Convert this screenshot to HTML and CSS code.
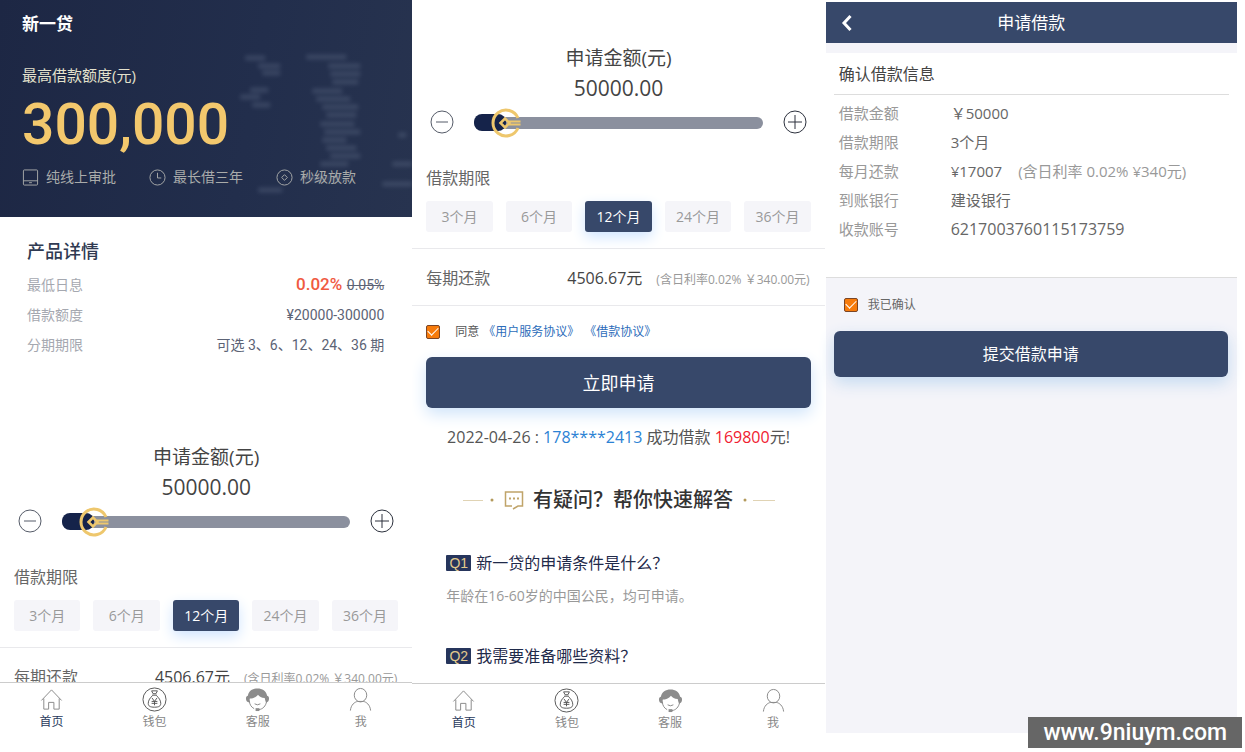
FILE: index.html
```html
<!DOCTYPE html>
<html lang="zh-CN">
<head>
<meta charset="utf-8">
<meta name="viewport" content="width=device-width, initial-scale=1">
<title>新一贷</title>
<link rel="stylesheet" href="styles.css">
</head>
<body>
<svg class="defs" aria-hidden="true">
  <symbol id="i-minus" viewBox="0 0 24 24"><circle cx="12" cy="12" r="11"/><path d="M6 12h12"/></symbol>
  <symbol id="i-plus" viewBox="0 0 24 24"><circle cx="12" cy="12" r="11"/><path d="M5 12h14M12 5v14"/></symbol>
  <symbol id="i-knob" viewBox="0 0 30 30"><path d="M27 10A13 13 0 1 0 27 20" stroke-width="3"/><path d="M9.500 15l4.500-4.500 4.500 4.500-4.500 4.500z" stroke-width="2.500"/><path d="M18 13.500h11.500M18 16.500h11.500" stroke-width="1.800"/></symbol>
  <symbol id="i-home" viewBox="0 0 26 26"><path d="M2.500 14L13 3l10.500 11M5 12v11h5v-7h5.500v7H21V12"/></symbol>
  <symbol id="i-purse" viewBox="0 0 26 26"><circle cx="13" cy="13" r="12"/><path d="M10 4h6l-1.500 3h-3zM10.500 8.500h5M11 9c-2.500 2-4.500 5-4.500 8 0 3 2 4 6.500 4s6.500-1 6.500-4c0-3-2-6-4.500-8"/><path d="M10.500 11.500l2.500 3.500 2.500-3.500M13 15v4M10 15h6M10 17h6"/></symbol>
  <symbol id="i-service" viewBox="0 0 26 26"><path class="solid" d="M1 12c0-2 1-3 2-3C4 4 8 1.500 13 1.500S22 4 23 9c1 0 2 1 2 3s-1 4-3 4c-1-1-1-3-1.500-4.500C17 11 15 10 13.500 8c-2 3-6 4-8.500 4L4.500 16C2 16 1 14 1 12z"/><path d="M4.500 14c0 4 2 7 5 8.500M22.500 15c-1 5-4 8-8 8.500M10 17.500q3 2 6 0"/><path class="solid" d="M11 22h4v3h-4z"/></symbol>
  <symbol id="i-me" viewBox="0 0 26 26"><ellipse cx="13" cy="8.500" rx="6.500" ry="7"/><path d="M2.500 24.500C3 18.500 7 15.500 10 15h6c3 .5 7 3.500 7.500 9.500"/></symbol>
</svg>

<div class="screens">
  <div class="screen">
    <main class="view">
      <header class="hero">
        <svg class="coins" viewBox="0 0 412 217" preserveAspectRatio="xMaxYMid slice" aria-hidden="true">
          <g class="coin-blur">
            <path d="M245 58h20M258 66h22M262 73h18M250 90h18M240 97h20M252 105h18M258 190h24"/>
            <path d="M306 57h40M328 66h32M330 74h30M332 82h26M312 91h30M316 99h34M322 107h36M326 115h30M320 124h34M324 132h36M322 140h24M326 148h30M330 156h30M320 164h28"/>
            <path d="M392 164h20M382 184h30M398 135h8M302 178h40"/>
          </g>
        </svg>
        <h1 class="brand">新一贷</h1>
        <p class="limit-label">最高借款额度(元)</p>
        <p class="limit">300,000</p>
        <ul class="perks">
          <li><svg class="perk-icon" viewBox="0 0 18 18" aria-hidden="true"><rect x="1.500" y="1" width="15" height="16" rx="1"/><path d="M1.500 12.500h15M7.500 14.500h3"/></svg>纯线上审批</li>
          <li><svg class="perk-icon" viewBox="0 0 18 18" aria-hidden="true"><circle cx="9" cy="9" r="8"/><path d="M9 4v5.500h4"/></svg>最长借三年</li>
          <li><svg class="perk-icon" viewBox="0 0 18 18" aria-hidden="true"><circle cx="9" cy="9" r="8"/><path d="M9 6L12 9 9 12 6 9z"/></svg>秒级放款</li>
        </ul>
      </header>
      <section class="product">
        <h2>产品详情</h2>
        <dl>
          <div><dt>最低日息</dt><dd><strong>0.02%</strong> <s>0.05%</s></dd></div>
          <div><dt>借款额度</dt><dd>¥20000-300000</dd></div>
          <div><dt>分期期限</dt><dd>可选 3、6、12、24、36 期</dd></div>
        </dl>
      </section>
      <section class="calc">
        <h2 class="amount-title"><label for="amount-a">申请金额(元)</label></h2>
        <output class="amount" for="amount-a">50000.00</output>
        <div class="slider-row">
          <button class="step" type="button" aria-label="减少"><svg><use href="#i-minus"/></svg></button>
          <div class="slider">
            <input id="amount-a" type="range" min="20000" max="300000" step="1000" value="50000">
            <span class="fill" style="width:11%"><svg class="knob" aria-hidden="true"><use href="#i-knob"/></svg></span>
          </div>
          <button class="step plus" type="button" aria-label="增加"><svg><use href="#i-plus"/></svg></button>
        </div>
        <h3 class="term-title">借款期限</h3>
        <div class="terms">
          <button type="button">3个月</button><button type="button">6个月</button><button type="button" class="on" aria-pressed="true">12个月</button><button type="button">24个月</button><button type="button">36个月</button>
        </div>
      </section>
      <div class="repay"><span>每期还款</span><b>4506.67元</b><small>(含日利率0.02% ￥340.00元)</small></div>
    </main>
    <nav class="tabs">
      <a class="on" href="#home"><svg><use href="#i-home"/></svg>首页</a>
      <a href="#wallet"><svg class="dark"><use href="#i-purse"/></svg>钱包</a>
      <a href="#service"><svg><use href="#i-service"/></svg>客服</a>
      <a href="#me"><svg><use href="#i-me"/></svg>我</a>
    </nav>
  </div>

  <div class="screen">
    <main class="view scrolled">
      <section class="calc">
        <h2 class="amount-title"><label for="amount-b">申请金额(元)</label></h2>
        <output class="amount" for="amount-b">50000.00</output>
        <div class="slider-row">
          <button class="step" type="button" aria-label="减少"><svg><use href="#i-minus"/></svg></button>
          <div class="slider">
            <input id="amount-b" type="range" min="20000" max="300000" step="1000" value="50000">
            <span class="fill" style="width:11%"><svg class="knob" aria-hidden="true"><use href="#i-knob"/></svg></span>
          </div>
          <button class="step plus" type="button" aria-label="增加"><svg><use href="#i-plus"/></svg></button>
        </div>
        <h3 class="term-title">借款期限</h3>
        <div class="terms">
          <button type="button">3个月</button><button type="button">6个月</button><button type="button" class="on" aria-pressed="true">12个月</button><button type="button">24个月</button><button type="button">36个月</button>
        </div>
      </section>
      <div class="repay"><span>每期还款</span><b>4506.67元</b><small>(含日利率0.02% ￥340.00元)</small></div>
      <div class="agree">
        <input id="agree" class="check" type="checkbox" checked>
        <label for="agree">同意</label>
        <a href="#service-terms">《用户服务协议》</a>
        <a href="#loan-terms">《借款协议》</a>
      </div>
      <button class="primary apply" type="button">立即申请</button>
      <p class="notice">2022-04-26 : <span class="phone">178****2413</span> 成功借款 <span class="sum">169800</span>元!</p>
      <section class="faq">
        <h2>
          <svg class="rule" viewBox="0 0 34 6" aria-hidden="true"><path d="M2 3.500h20"/><circle cx="31" cy="3" r="1.500"/></svg>
          <svg class="chat" viewBox="0 0 20 20" aria-hidden="true"><path d="M8 16H1.500V2h17v14H14l-5 3"/><path class="dots" d="M5 8.500h2M9 8.500h2M13 8.500h2"/></svg>
          <span>有疑问？帮你快速解答</span>
          <svg class="rule" viewBox="0 0 34 6" aria-hidden="true"><circle cx="3" cy="3" r="1.500"/><path d="M11 3.500h22"/></svg>
        </h2>
        <h3><span class="q">Q1</span>新一贷的申请条件是什么？</h3>
        <p>年龄在16-60岁的中国公民，均可申请。</p>
        <h3><span class="q">Q2</span>我需要准备哪些资料？</h3>
      </section>
    </main>
    <nav class="tabs">
      <a class="on" href="#home"><svg><use href="#i-home"/></svg>首页</a>
      <a href="#wallet"><svg class="dark"><use href="#i-purse"/></svg>钱包</a>
      <a href="#service"><svg><use href="#i-service"/></svg>客服</a>
      <a href="#me"><svg><use href="#i-me"/></svg>我</a>
    </nav>
  </div>

  <div class="screen confirm">
    <header class="bar">
      <a href="#back" aria-label="返回"><svg viewBox="0 0 14 18"><path d="M10.500 2L4 9l6.500 7"/></svg></a>
      <h1>申请借款</h1>
    </header>
    <section class="info">
      <h2>确认借款信息</h2>
      <dl>
        <div><dt>借款金额</dt><dd>￥50000</dd></div>
        <div><dt>借款期限</dt><dd>3个月</dd></div>
        <div><dt>每月还款</dt><dd>¥17007<span>(含日利率 0.02% ¥340元)</span></dd></div>
        <div><dt>到账银行</dt><dd>建设银行</dd></div>
        <div><dt>收款账号</dt><dd class="account">6217003760115173759</dd></div>
      </dl>
    </section>
    <div class="agreed">
      <input id="confirmed" class="check" type="checkbox" checked>
      <label for="confirmed">我已确认</label>
    </div>
    <button class="primary submit" type="button">提交借款申请</button>
  </div>
</div>
<div class="watermark">www.9niuym.com</div>
</body>
</html>
```
FILE: styles.css
```css
* { box-sizing: border-box; }
h1, h2, h3, p, ul, dl, dd { margin: 0; padding: 0; font-weight: 400; }
ul { list-style: none; }
a { text-decoration: none; color: inherit; }
button { font: inherit; border: 0; padding: 0; cursor: pointer; }
svg { fill: none; stroke: currentColor; }
body {
  margin: 0;
  background: #fff;
  color: #555;
  font: 16px/24px "Open Sans", "Noto Sans CJK SC", sans-serif;
}
.defs { display: none; }
.screens {
  display: grid;
  grid-template-columns: repeat(3, 1fr);
  height: 100vh;
  padding-right: 8px;
}
.screen { display: flex; flex-direction: column; min-height: 0; min-width: 0; background: #fff; }
.view { flex: 1; min-height: 0; overflow: hidden; }
.scrolled { padding-top: 43px; }

/* hero */
.hero {
  position: relative;
  padding: 12px 22px 28px;
  background: linear-gradient(100deg, #1d2744, #222e4c 60%, #27334f);
  color: #e3e1cc;
}
.coins { position: absolute; inset: 0; width: 100%; height: 100%; }
.coin-blur { stroke: #8492ab; stroke-width: 5; opacity: .24; filter: blur(2px); }
.brand, .limit-label, .limit, .perks { position: relative; }
.brand { font-size: 17px; font-weight: 700; color: #fff; }
.limit-label { margin-top: 27px; font-size: 15px; }
.limit {
  margin-top: 8px;
  font: 500 57px/60px Roboto, sans-serif;
  color: #f3c86d;
}
.perks { display: flex; gap: 33px; margin-top: 10px; font-size: 14px; color: #a9abaa; }
.perks li { display: flex; align-items: center; gap: 7px; }
.perk-icon { width: 17px; height: 17px; }

/* product */
.product {
  padding: 20px 28px 82px 27px;
  font: 14px/30px Roboto, "Noto Sans CJK SC", sans-serif;
}
.product h2 { margin-bottom: 3px; font-size: 18px; font-weight: 500; color: #303a52; }
.product dl div { display: flex; justify-content: space-between; height: 30px; }
.product dt { color: #a5a8b0; }
.product dd { color: #5c6375; }
.product strong { font-size: 17px; line-height: 28px; font-weight: 500; color: #f05a41; }
.product s { margin-left: 1px; }

/* calculator */
.calc { padding: 0 14px 16px; text-align: center; border-bottom: 1px solid #e9e9ec; }
.amount-title { font-size: 19px; line-height: 30px; color: #444; }
.amount { display: block; font-size: 21px; line-height: 30px; color: #444; }
.slider-row { display: flex; align-items: center; gap: 20px; height: 30px; margin: 4px 4px 0; }
.step { width: 24px; height: 24px; background: none; color: #555b68; }
.step.plus { color: #2c313d; }
.step svg { display: block; width: 24px; height: 24px; }
.slider { position: relative; flex: 1; height: 30px; margin-top: 2px; }
.slider input { appearance: none; display: block; width: 100%; height: 30px; margin: 0; background: none; }
.slider input::-webkit-slider-runnable-track { height: 12px; border-radius: 6px; background: #8b909e; }
.slider input::-webkit-slider-thumb { appearance: none; width: 30px; height: 12px; background: none; }
.fill {
  position: absolute;
  left: 0;
  top: 6px;
  height: 17px;
  border-radius: 8px;
  background: #15234a;
  pointer-events: none;
}
.knob { position: absolute; right: -15px; top: -6px; width: 30px; height: 30px; color: #eec76d; }
.term-title { margin-top: 29px; font-size: 16px; text-align: left; color: #666; }
.terms { display: grid; grid-template-columns: repeat(5, 1fr); gap: 13px; margin-top: 11px; }
.terms button { height: 31px; border-radius: 3px; background: #f5f5f9; font-size: 14px; color: #999; }
.terms .on { background: #37486a; color: #fff; box-shadow: 0 5px 14px #cfe4ff; }
.repay {
  display: flex;
  align-items: baseline;
  height: 57px;
  padding: 17px 15px 0 14px;
  border-bottom: 1px solid #e9e9ec;
  color: #666;
}
.repay span { margin-right: auto; }
.repay b { font-weight: 400; color: #444; }
.repay small { margin-left: 14px; font-size: 12px; color: #999; }

/* agreement, actions */
.agree { display: flex; align-items: center; height: 51px; padding: 0 14px; font-size: 12px; color: #555; }
.agree label { margin: 0 4px 0 15px; }
.agree a { margin-right: 5px; color: #2c6cba; }
.check {
  appearance: none;
  display: grid;
  place-items: center;
  width: 14px;
  height: 14px;
  margin: 0;
  border: 1px solid #7a4526;
  border-radius: 2px;
  background: #f77b0b;
}
.check:checked::after {
  content: "";
  width: 9px;
  height: 5px;
  margin-bottom: 3px;
  border: solid #fff;
  border-width: 0 0 1px 1px;
  transform: rotate(-45deg);
}
.primary { display: block; border-radius: 6px; background: #37486a; color: #fff; box-shadow: 0 6px 16px #cfe4fa; }
.apply { width: calc(100% - 28px); height: 51px; margin: 0 14px; font-size: 18px; }
.notice { margin-top: 17px; text-align: center; }
.phone { color: #2c82d4; }
.sum { color: #f02030; }

/* faq */
.faq { padding: 0 34px; }
.faq h2 {
  display: flex;
  align-items: center;
  justify-content: center;
  gap: 9px;
  margin: 36px 0 0;
  font-size: 20px;
  line-height: 30px;
  font-weight: 500;
  white-space: nowrap;
  color: #333;
}
.rule { width: 34px; height: 6px; stroke: #e0d3b4; }
.rule circle { fill: #b39a5c; stroke: none; }
.chat { width: 20px; height: 20px; stroke: #c0a469; stroke-width: 1.500; }
.dots { stroke-width: 2; }
.faq h3 { display: flex; align-items: center; gap: 5px; margin-top: 36px; font-size: 16px; color: #1f2a4a; }
.faq p { margin-top: 9px; font-size: 14px; color: #999; }
.q {
  width: 25px;
  border-radius: 1px;
  background: #26355c;
  color: #e3ca8c;
  font: 14px/16px "Liberation Sans", sans-serif;
  text-align: center;
}

/* tab bar */
.tabs {
  display: grid;
  grid-template-columns: repeat(4, 1fr);
  height: 70px;
  padding-top: 4px;
  border-top: 1px solid #ccc;
  background: #fff;
  font-size: 12px;
  line-height: 20px;
  color: #888;
}
.scrolled + .tabs { height: 69px; }
.tabs a { display: flex; flex-direction: column; align-items: center; }
.tabs svg { width: 25px; height: 25px; }
.tabs .dark { color: #555; }
.tabs .on { color: #2a3a5c; }
.tabs .on svg { color: #888; }
.solid { fill: #8c8c8c; stroke: none; }

/* confirm */
.confirm { margin: 2px 0 19px 1px; background: #f4f4f9; }
.bar { display: grid; grid-template-columns: 42px 1fr 42px; align-items: center; height: 41px; background: #37486a; color: #fff; }
.bar h1 { font-size: 17px; text-align: center; }
.bar a { display: grid; place-items: center; }
.bar svg { width: 14px; height: 18px; stroke-width: 3; }
.info { margin-top: 10px; padding: 0 8px 33px; border-bottom: 1px solid #ddd; background: #fff; }
.info h2 { padding: 9px 5px 8px; border-bottom: 1px solid #ddd; font-size: 16px; color: #444; }
.info dl { padding: 4px 5px 0; font-size: 15px; line-height: 29px; }
.info dl div { display: flex; }
.info dt { width: 112px; color: #999; }
.info dd { color: #666; }
.info dd span { margin-left: 16px; color: #999; }
.info .account { font-size: 16px; }
.agreed { display: flex; align-items: center; gap: 10px; height: 53px; padding: 0 18px; font-size: 12px; color: #666; }
.submit { width: calc(100% - 17px); height: 46px; margin: 0 8px; font-size: 16px; box-shadow: 0 6px 16px #c5dbf1; }

.watermark {
  position: fixed;
  right: 3px;
  bottom: 4px;
  padding: 0 15px;
  background: #666;
  color: #fff;
  font: 500 23px/31px Roboto, sans-serif;
}
```
